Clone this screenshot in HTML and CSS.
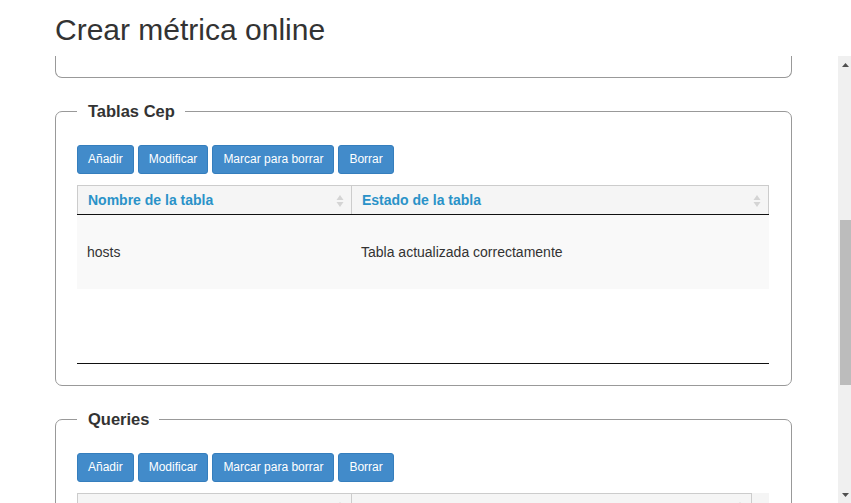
FILE: index.html
```html
<!DOCTYPE html>
<html lang="es">
<head>
<meta charset="utf-8">
<title>Crear métrica online</title>
<link rel="stylesheet" href="styles.css">
</head>
<body>
<header class="page-header">
  <h1 class="page-title">Crear métrica online</h1>
</header>
<div class="main">
  <div class="content">
    <div class="panel panel-cut"></div>

    <fieldset class="panel">
      <legend class="panel-legend">Tablas Cep</legend>
      <div class="toolbar">
        <button class="btn">Añadir</button>
        <button class="btn">Modificar</button>
        <button class="btn">Marcar para borrar</button>
        <button class="btn">Borrar</button>
      </div>
      <div class="dt">
        <div class="dt-head">
          <table class="dt-table">
            <colgroup><col class="col-1"><col></colgroup>
            <thead>
              <tr>
                <th><span>Nombre de la tabla</span><svg class="sort" width="8" height="14" viewBox="0 0 8 14"><path d="M4 1 L7.5 6 H0.5 Z" fill="#d4d4d4"/><path d="M4 13 L7.5 8 H0.5 Z" fill="#d4d4d4"/></svg></th>
                <th><span>Estado de la tabla</span><svg class="sort" width="8" height="14" viewBox="0 0 8 14"><path d="M4 1 L7.5 6 H0.5 Z" fill="#d4d4d4"/><path d="M4 13 L7.5 8 H0.5 Z" fill="#d4d4d4"/></svg></th>
              </tr>
            </thead>
          </table>
        </div>
        <div class="dt-body">
          <table class="dt-table">
            <colgroup><col class="col-1"><col></colgroup>
            <tbody>
              <tr class="row-odd">
                <td>hosts</td>
                <td>Tabla actualizada correctamente</td>
              </tr>
            </tbody>
          </table>
        </div>
      </div>
    </fieldset>

    <fieldset class="panel">
      <legend class="panel-legend">Queries</legend>
      <div class="toolbar">
        <button class="btn">Añadir</button>
        <button class="btn">Modificar</button>
        <button class="btn">Marcar para borrar</button>
        <button class="btn">Borrar</button>
      </div>
      <div class="dt">
        <div class="dt-head dt-head-scroll">
          <table class="dt-table">
            <colgroup><col class="col-1"><col></colgroup>
            <thead>
              <tr>
                <th><svg class="sort" width="8" height="14" viewBox="0 0 8 14"><path d="M4 1 L7.5 6 H0.5 Z" fill="#d4d4d4"/><path d="M4 13 L7.5 8 H0.5 Z" fill="#d4d4d4"/></svg></th>
                <th><svg class="sort" width="8" height="14" viewBox="0 0 8 14"><path d="M4 1 L7.5 6 H0.5 Z" fill="#d4d4d4"/><path d="M4 13 L7.5 8 H0.5 Z" fill="#d4d4d4"/></svg></th>
              </tr>
            </thead>
          </table>
        </div>
      </div>
    </fieldset>
  </div>
  <div class="scrollbar">
    <div class="sb-arrow"><svg width="7" height="4" viewBox="0 0 7 4"><path d="M3.5 0 L7 4 H0 Z" fill="#505050"/></svg></div>
    <div class="sb-track">
      <div class="sb-gap-top"></div>
      <div class="sb-thumb"></div>
    </div>
    <div class="sb-arrow"><svg width="7" height="4" viewBox="0 0 7 4"><path d="M3.5 4 L7 0 H0 Z" fill="#505050"/></svg></div>
  </div>
</div>
</body>
</html>
```
FILE: styles.css
```css
* { box-sizing: border-box; }

html, body {
  margin: 0;
  padding: 0;
  height: 503px;
  overflow: hidden;
  background: #fff;
  font-family: "Liberation Sans", Arial, sans-serif;
  color: #333;
}

.page-header {
  height: 56px;
  padding: 13px 0 0 55px;
}

.page-title {
  margin: 0;
  font-size: 30px;
  font-weight: 400;
  line-height: 33px;
  color: #333;
}

.main {
  display: flex;
  height: 447px;
}

.content {
  flex: 1;
  overflow: hidden;
  padding-left: 55px;
  padding-right: 46px;
}

.panel {
  margin: 0 0 23px 0;
  border: 1px solid #999;
  border-radius: 7px;
  padding: 0 22px 21px 21px;
  min-width: 0;
}

.panel-cut {
  height: 22px;
  border-top: none;
  border-radius: 0 0 7px 7px;
  padding: 0;
}

.panel-legend {
  padding: 0 10px 0 11px;
  margin: 0;
  font-size: 16.5px;
  font-weight: 700;
  line-height: 20px;
  color: #333;
}

.toolbar {
  display: flex;
  gap: 4px;
  margin-top: 24px;
  margin-bottom: 11px;
}

.btn {
  font-family: "Liberation Sans", Arial, sans-serif;
  font-size: 12px;
  line-height: 17px;
  padding: 5px 10px;
  border: 1px solid #357ebd;
  border-radius: 3px;
  background: #428bca;
  color: #fff;
  cursor: pointer;
}

.dt-head {
  background: #f5f5f5;
}

.dt-table {
  width: 100%;
  border-collapse: collapse;
  table-layout: fixed;
  font-size: 14px;
}

.col-1 { width: 274px; }

.dt-table th {
  height: 29px;
  padding: 0 7px 0 10px;
  border-top: 1px solid #ccc;
  border-left: 1px solid #ccc;
  border-right: 1px solid #ccc;
  border-bottom: 1px solid #111;
  background: #f5f5f5;
  color: #2a92c8;
  font-weight: 700;
  text-align: left;
}

.dt-table th span {
  float: left;
  line-height: 27px;
}

.dt-table th .sort {
  float: right;
  margin-top: 7px;
}

.dt-head-scroll .dt-table {
  width: calc(100% - 17px);
}

.dt-head-scroll .dt-table th {
  border-bottom: none;
  height: 20px;
}

.dt-body {
  height: 149px;
  border-bottom: 1px solid #111;
}

.dt-table td {
  height: 74px;
  padding: 0 10px;
  vertical-align: middle;
  color: #333;
}

.row-odd {
  background: #f9f9f9;
}

.scrollbar {
  width: 13px;
  height: 447px;
  background: #f0f0f0;
  display: flex;
  flex-direction: column;
}

.sb-arrow {
  height: 17px;
  display: flex;
  align-items: center;
  justify-content: center;
  padding-left: 1px;
}

.sb-track {
  flex: 1;
  display: flex;
  flex-direction: column;
  padding-left: 2px;
}

.sb-gap-top {
  height: 147px;
}

.sb-thumb {
  height: 165px;
  background: #bcbcbc;
}
```
